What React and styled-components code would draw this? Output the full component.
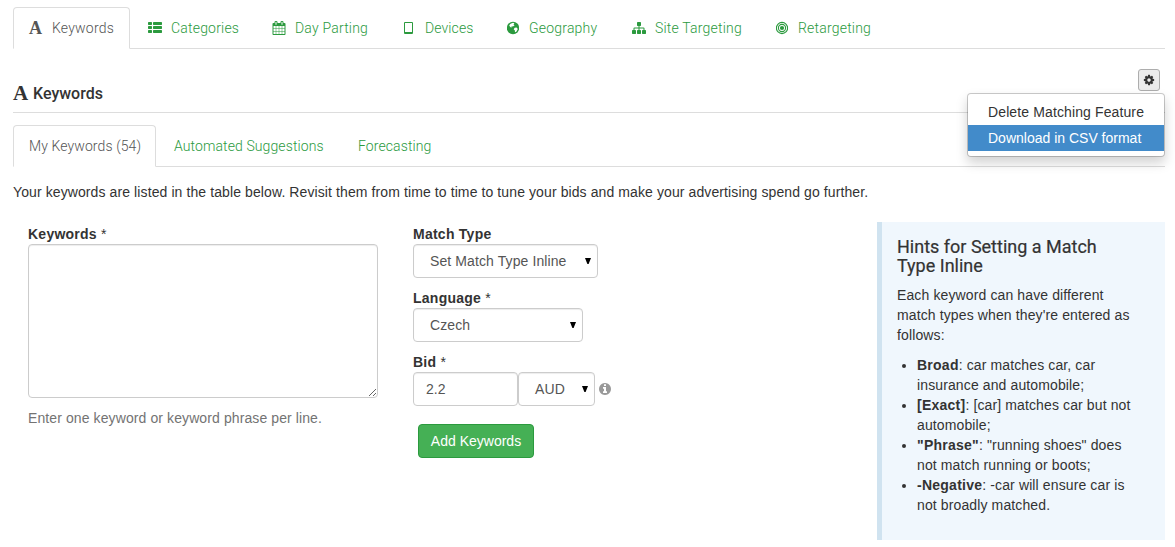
import React from "react"
import styled, { createGlobalStyle } from "styled-components"

const GlobalStyle = createGlobalStyle`
    * {
        box-sizing: border-box;
    }

    body {
        margin: 0;
        background: #fff;
        color: #333;
        font-family: "Liberation Sans", Arial, sans-serif;
        font-size: 14px;
        line-height: 20px;
        letter-spacing: 0.1px;
    }
`

const paths = {
    list: "M512 1248v192q0 40-28 68t-68 28h-320q-40 0-68-28t-28-68v-192q0-40 28-68t68-28h320q40 0 68 28t28 68zm0-512v192q0 40-28 68t-68 28h-320q-40 0-68-28t-28-68v-192q0-40 28-68t68-28h320q40 0 68 28t28 68zm1280 512v192q0 40-28 68t-68 28h-960q-40 0-68-28t-28-68v-192q0-40 28-68t68-28h960q40 0 68 28t28 68zm-1280-1024v192q0 40-28 68t-68 28h-320q-40 0-68-28t-28-68v-192q0-40 28-68t68-28h320q40 0 68 28t28 68zm1280 512v192q0 40-28 68t-68 28h-960q-40 0-68-28t-28-68v-192q0-40 28-68t68-28h960q40 0 68 28t28 68zm0-512v192q0 40-28 68t-68 28h-960q-40 0-68-28t-28-68v-192q0-40 28-68t68-28h960q40 0 68 28t28 68z",
    calendar: "M192 1664h288v-288h-288v288zm352 0h320v-288h-320v288zm-352-352h288v-320h-288v320zm352 0h320v-320h-320v320zm-352-384h288v-288h-288v288zm736 736h320v-288h-320v288zm-384-736h320v-288h-320v288zm768 736h288v-288h-288v288zm-384-352h320v-320h-320v320zm-352-864v-288q0-13-9.5-22.5t-22.5-9.5h-64q-13 0-22.5 9.5t-9.5 22.5v288q0 13 9.5 22.5t22.5 9.5h64q13 0 22.5-9.5t9.5-22.5zm736 864h288v-320h-288v320zm-384-384h320v-288h-320v288zm384 0h288v-288h-288v288zm32-480v-288q0-13-9.5-22.5t-22.5-9.5h-64q-13 0-22.5 9.5t-9.5 22.5v288q0 13 9.5 22.5t22.5 9.5h64q13 0 22.5-9.5t9.5-22.5zm384-64v1280q0 52-38 90t-90 38h-1408q-52 0-90-38t-38-90v-1280q0-52 38-90t90-38h128v-96q0-66 47-113t113-47h64q66 0 113 47t47 113v96h384v-96q0-66 47-113t113-47h64q66 0 113 47t47 113v96h128q52 0 90 38t38 90z",
    sitemap: "M1792 1248v320q0 40-28 68t-68 28h-320q-40 0-68-28t-28-68v-320q0-40 28-68t68-28h96v-192h-512v192h96q40 0 68 28t28 68v320q0 40-28 68t-68 28h-320q-40 0-68-28t-28-68v-320q0-40 28-68t68-28h96v-192h-512v192h96q40 0 68 28t28 68v320q0 40-28 68t-68 28h-320q-40 0-68-28t-28-68v-320q0-40 28-68t68-28h96v-192q0-52 38-90t90-38h512v-192h-96q-40 0-68-28t-28-68v-320q0-40 28-68t68-28h320q40 0 68 28t28 68v320q0 40-28 68t-68 28h-96v192h512q52 0 90 38t38 90v192h96q40 0 68 28t28 68z",
    cog: "M1152 896q0-106-75-181t-181-75-181 75-75 181 75 181 181 75 181-75 75-181zm512-109v222q0 12-8 23t-20 13l-185 28q-19 54-39 91 35 50 107 138 10 12 10 25t-9 23q-27 37-99 108t-94 71q-12 0-26-9l-138-108q-44 23-91 38-16 136-29 186-7 28-36 28h-222q-14 0-24.5-8.5t-11.5-21.5l-28-184q-49-16-90-37l-141 107q-10 9-25 9-14 0-25-11-126-114-165-168-7-10-7-23 0-12 8-23 15-21 51-66.5t54-70.5q-27-50-41-99l-183-27q-13-2-21-12.5t-8-23.5v-222q0-12 8-23t19-13l186-28q14-46 39-92-40-57-107-138-10-12-10-24 0-10 9-23 26-36 98.5-107.5t94.5-71.5q13 0 26 10l138 107q44-23 91-38 16-136 29-186 7-28 36-28h222q14 0 24.5 8.5t11.5 21.5l28 184q49 16 90 37l142-107q9-9 24-9 13 0 25 10 129 119 165 170 7 8 7 22 0 12-8 23-15 21-51 66.5t-54 70.5q26 50 41 98l183 28q13 2 21 12.5t8 23.5z",
    info: "M1152 1376v-160q0-14-9-23t-23-9h-96v-512q0-14-9-23t-23-9h-320q-14 0-23 9t-9 23v160q0 14 9 23t23 9h96v320h-96q-14 0-23 9t-9 23v160q0 14 9 23t23 9h448q14 0 23-9t9-23zm-128-896v-160q0-14-9-23t-23-9h-192q-14 0-23 9t-9 23v160q0 14 9 23t23 9h192q14 0 23-9t9-23zm640 416q0 209-103 385.5t-279.5 279.5-385.5 103-385.5-103-279.5-279.5-103-385.5 103-385.5 279.5-279.5 385.5-103 385.5 103 279.5 279.5 103 385.5z",
}

const Icon = ({ name, size = 14 }) => (
    <Svg width={size} height={size} viewBox="0 0 1792 1792">
        <path d={paths[name]} />
    </Svg>
)

const TabletIcon = () => (
    <Svg width="11" height="14" viewBox="0 0 11 14">
        <path fillRule="evenodd" d="M2 1h7q1 0 1 1v10q0 1-1 1H2q-1 0-1-1V2q0-1 1-1zM2 2v9h7V2z" />
    </Svg>
)

const GlobeIcon = () => (
    <Svg width="12" height="14" viewBox="0 0 12 14">
        <circle cx="6" cy="7" r="6.200" />
        <Land d="M3.600 2.700 6 1.700 7.400 2.300 6.500 3.500 7.600 4.300 6 5.500 4.700 5.300 4.300 6.700 3 5.800 2.200 4.300zM7.600 6.800 9.600 6.400 10.800 8 9.300 10.800 8 11.200 7.800 9.300 6.700 8.400z" />
    </Svg>
)

const BullseyeIcon = () => (
    <Svg width="12" height="14" viewBox="0 0 12 14">
        <circle cx="6" cy="7" r="2.100" />
        <Ring cx="6" cy="7" r="3.600" />
        <Ring cx="6" cy="7" r="5.600" />
    </Svg>
)

const LetterIcon = ({ large }) => <Letter $large={large}>A</Letter>

const tabs = [
    { label: "Keywords", icon: <LetterIcon />, width: 117, gap: 9 },
    { label: "Categories", icon: <Icon name="list" />, width: 122, gap: 9 },
    { label: "Day Parting", icon: <Icon name="calendar" />, width: 129, gap: 9 },
    { label: "Devices", icon: <TabletIcon />, width: 102, gap: 11 },
    { label: "Geography", icon: <GlobeIcon />, width: 123, gap: 10 },
    { label: "Site Targeting", icon: <Icon name="sitemap" />, width: 142, gap: 9 },
    { label: "Retargeting", icon: <BullseyeIcon />, width: 127, gap: 10 },
]

const hints = [
    { term: "Broad", text: ": car matches car, car insurance and automobile;" },
    { term: "[Exact]", text: ": [car] matches car but not automobile;" },
    { term: '"Phrase"', text: ': "running shoes" does not match running or boots;' },
    { term: "-Negative", text: ": -car will ensure car is not broadly matched." },
]

const SelectBox = ({ value, width }) => (
    <Select $width={width}>
        <span>{value}</span>
        <Arrow viewBox="0 0 6 6"><path d="M0 0h6L3.600 6H2.400z" /></Arrow>
    </Select>
)

const App = () => (
    <Page>
        <GlobalStyle />
        <TabBar>
            {tabs.map((tab, index) => (
                <Tab key={tab.label} $active={index === 0} $width={tab.width} $gap={tab.gap}>
                    {tab.icon}
                    <span>{tab.label}</span>
                </Tab>
            ))}
        </TabBar>
        <Header>
            <Title><LetterIcon large />Keywords</Title>
            <MenuAnchor>
                <CogButton aria-label="Settings"><Icon name="cog" size={12} /></CogButton>
                <Menu>
                    <MenuItem>Delete Matching Feature</MenuItem>
                    <MenuItem $active>Download in CSV format</MenuItem>
                </Menu>
            </MenuAnchor>
        </Header>
        <TabBar>
            <Tab $active $width={143}>My Keywords (54)</Tab>
            <Tab $width={182}>Automated Suggestions</Tab>
            <Tab $width={106}>Forecasting</Tab>
        </TabBar>
        <Intro>
            Your keywords are listed in the table below. Revisit them from time to time to tune your bids and make your advertising spend go further.
        </Intro>
        <Content>
            <KeywordColumn>
                <Label>Keywords <small>*</small></Label>
                <KeywordInput />
                <Help>Enter one keyword or keyword phrase per line.</Help>
            </KeywordColumn>
            <OptionColumn>
                <Field>
                    <Label>Match Type</Label>
                    <SelectBox value="Set Match Type Inline" width={185} />
                </Field>
                <Field>
                    <Label>Language <small>*</small></Label>
                    <SelectBox value="Czech" width={170} />
                </Field>
                <Field>
                    <Label>Bid <small>*</small></Label>
                    <BidRow>
                        <BidInput defaultValue="2.2" />
                        <SelectBox value="AUD" width={77} />
                        <Info><Icon name="info" /></Info>
                    </BidRow>
                </Field>
                <AddButton>Add Keywords</AddButton>
            </OptionColumn>
            <Hints>
                <HintTitle>Hints for Setting a Match Type Inline</HintTitle>
                <HintText>Each keyword can have different match types when they're entered as follows:</HintText>
                <HintList>
                    {hints.map((hint) => (
                        <li key={hint.term}><b>{hint.term}</b>{hint.text}</li>
                    ))}
                </HintList>
            </Hints>
        </Content>
    </Page>
)

const Page = styled.div`
    width: 1175px;
    height: 547px;
    padding: 7px 10px 0 13px;
    overflow: hidden;
`

const Svg = styled.svg`
    display: block;
    flex: none;
    fill: currentColor;
`

const Land = styled.path`
    fill: #fff;
`

const Ring = styled.circle`
    fill: none;
    stroke: currentColor;
    stroke-width: 1.1;
`

const Letter = styled.span`
    flex: none;
    width: ${props => props.$large ? "15px" : "14px"};
    margin-top: ${props => props.$large ? "-1px" : "0"};
    margin-right: ${props => props.$large ? "5px" : "0"};
    font-family: "Liberation Serif", serif;
    font-size: ${props => props.$large ? "21px" : "18px"};
    font-weight: bold;
    line-height: 20px;
`

const TabBar = styled.nav`
    display: flex;
    height: 42px;
    border-bottom: 1px solid #ddd;
`

const Tab = styled.a`
    display: flex;
    align-items: center;
    gap: ${props => props.$gap || 0}px;
    width: ${props => props.$width}px;
    height: 42px;
    margin-right: 2px;
    padding: 0 15px;
    border: 1px solid ${props => props.$active ? "#ddd" : "transparent"};
    border-bottom-color: ${props => props.$active ? "#fff" : "transparent"};
    border-radius: 4px 4px 0 0;
    color: ${props => props.$active ? "#555" : "#2b9a3e"};
    font-family: Roboto, sans-serif;
    font-weight: 300;
    letter-spacing: ${props => props.$gap && props.$gap !== 11 ? "0.2px" : "0.1px"};
    white-space: nowrap;
`

const Header = styled.header`
    display: flex;
    justify-content: space-between;
    height: 64px;
    margin-bottom: 12px;
    padding-top: 20px;
    border-bottom: 1px solid #ddd;
`

const Title = styled.h3`
    display: flex;
    margin: 15px 0 0;
    font-family: Roboto, sans-serif;
    font-size: 16px;
    font-weight: 500;
    letter-spacing: 0;
`

const MenuAnchor = styled.div`
    position: relative;
    padding-right: 5px;
`

const CogButton = styled.button`
    display: flex;
    align-items: center;
    justify-content: center;
    width: 22px;
    height: 22px;
    padding: 0;
    border: 1px solid #adadad;
    border-radius: 3px;
    background: #ebebeb;
    color: #333;
`

const Menu = styled.div`
    position: absolute;
    top: 24px;
    right: 0;
    width: 198px;
    padding: 5px 0;
    border: 1px solid rgba(0, 0, 0, 0.2);
    border-radius: 4px;
    background: #fff;
    background-clip: padding-box;
    box-shadow: 0 6px 12px rgba(0, 0, 0, 0.175);
`

const MenuItem = styled.div`
    height: 26px;
    padding: 3px 20px;
    background: ${props => props.$active ? "#428bca" : "#fff"};
    color: ${props => props.$active ? "#fff" : "#333"};
    letter-spacing: ${props => props.$active ? "0" : "0.12px"};
    white-space: nowrap;
`

const Intro = styled.p`
    margin: 15px 0 20px;
`

const Content = styled.div`
    display: flex;
    align-items: flex-start;
`

const KeywordColumn = styled.div`
    width: 350px;
    margin: 2px 35px 0 15px;
`

const Label = styled.label`
    display: block;
    height: 20px;
    font-weight: bold;
    letter-spacing: 0.25px;

    small {
        font-size: 14px;
        font-weight: normal;
    }
`

const control = `
    border: 1px solid #ccc;
    border-radius: 4px;
    background: #fff;
    box-shadow: inset 0 1px 1px rgba(0, 0, 0, 0.075);
    color: #555;
    font-family: "Liberation Sans", Arial, sans-serif;
    font-size: 14px;
`

const KeywordInput = styled.textarea`
    ${control}
    display: block;
    width: 350px;
    height: 154px;
    padding: 6px 12px;
    resize: both;
`

const Help = styled.p`
    margin: 10px 0 0;
    color: #737373;
`

const OptionColumn = styled.div`
    width: 464px;
    margin-top: 2px;
`

const Field = styled.div`
    margin-bottom: 10px;
`

const Select = styled.div`
    ${control}
    display: flex;
    align-items: center;
    justify-content: space-between;
    width: ${props => props.$width}px;
    height: 34px;
    padding: 0 6px 0 16px;
`

const Arrow = styled.svg`
    width: 6px;
    height: 6px;
    fill: #000;
`

const BidRow = styled.div`
    display: flex;
    align-items: center;
`

const BidInput = styled.input`
    ${control}
    width: 105px;
    height: 34px;
    padding: 6px 12px;
`

const Info = styled.span`
    margin-left: 3px;
    color: #999;
`

const AddButton = styled.button`
    width: 116px;
    height: 34px;
    margin: 8px 0 0 5px;
    padding: 0;
    border: 1px solid #2b9a3e;
    border-radius: 4px;
    background: #45b055;
    color: #fff;
    font-family: "Liberation Sans", Arial, sans-serif;
    font-size: 14px;
`

const Hints = styled.aside`
    width: 288px;
    height: 318px;
    padding: 15px 30px 0 15px;
    border-left: 5px solid #d0e3f0;
    background: #f0f7fd;
`

const HintTitle = styled.h4`
    margin: 0 0 10px;
    font-family: Roboto, sans-serif;
    font-size: 18px;
    font-weight: 400;
    letter-spacing: 0;
    line-height: 19px;
    -webkit-text-stroke: 0.2px currentColor;
`

const HintText = styled.p`
    margin: 0 0 10px;
    letter-spacing: 0.12px;
`

const HintList = styled.ul`
    margin: 0;
    padding-left: 20px;
    letter-spacing: 0.12px;

    b {
        letter-spacing: 0.25px;
    }
`

export default App
